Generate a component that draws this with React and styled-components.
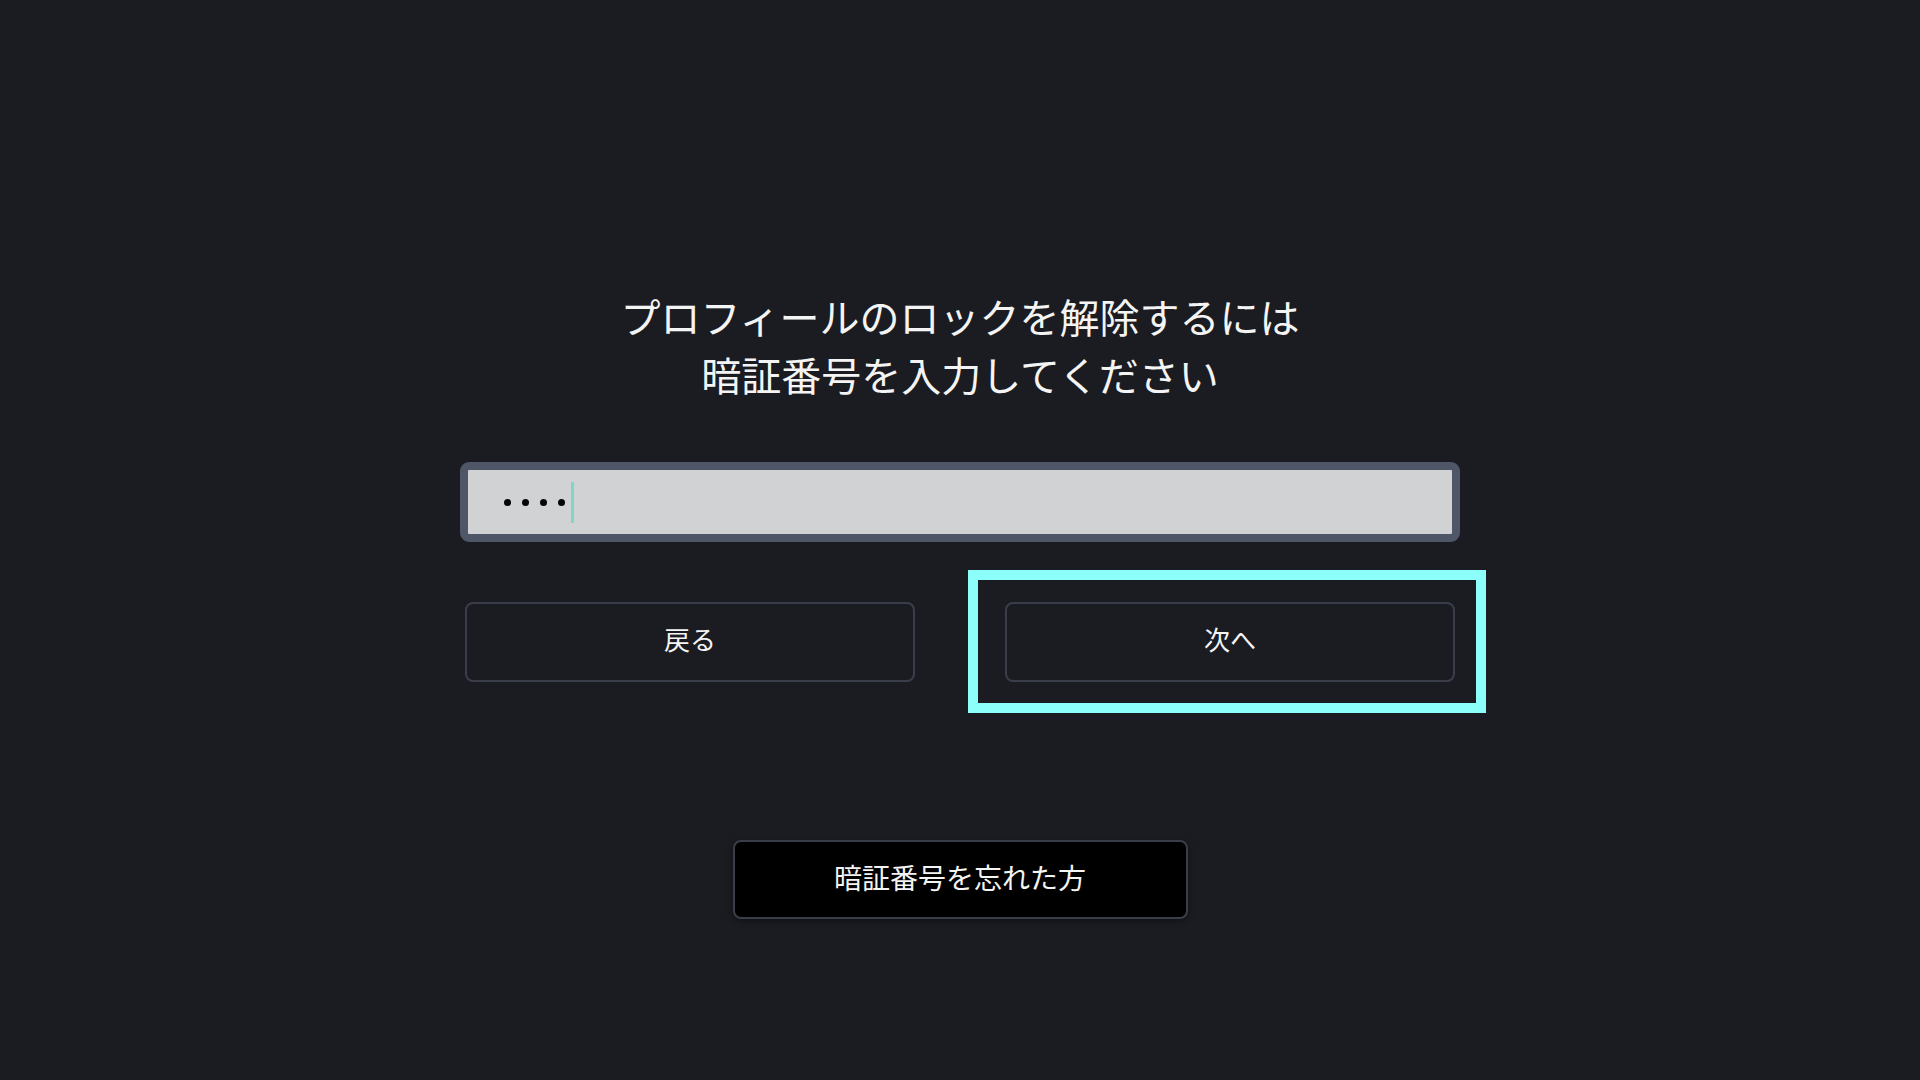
import React from "react";
import styled, { createGlobalStyle } from "styled-components";

const GlobalStyle = createGlobalStyle`
  html, body {
    margin: 0;
    padding: 0;
    background: #1b1c21;
  }
  body {
    font-family: "Noto Sans CJK JP", "Noto Sans", sans-serif;
    color: #f2f2f2;
  }
`;

const Screen = styled.main`
  width: 1920px;
  height: 1080px;
  background: #1b1c21;
  display: flex;
  flex-direction: column;
  align-items: center;
  padding-top: 287px;
  box-sizing: border-box;
`;

const Title = styled.h1`
  margin: 0;
  font-size: 40px;
  font-weight: 400;
  line-height: 58px;
  text-align: center;
  color: #f4f4f4;
`;

const PinField = styled.div`
  margin-top: 59px;
  width: 1000px;
  height: 80px;
  box-sizing: border-box;
  border: 8px solid #4f5667;
  border-radius: 9px;
  background: #d1d2d4;
  display: flex;
  align-items: center;
  padding-left: 36px;
`;

const Dots = styled.div`
  display: flex;
  align-items: center;
  gap: 11px;
`;

const Dot = styled.span`
  width: 7px;
  height: 7px;
  border-radius: 50%;
  background: #050505;
`;

const Caret = styled.span`
  width: 3px;
  height: 41px;
  margin-left: 6px;
  background: #7fd7c8;
`;

const ButtonRow = styled.div`
  margin-top: 28px;
  padding-right: 6px;
  display: flex;
  gap: 22px;
`;

const FocusFrame = styled.div`
  padding: 22px 21px 21px 27px;
  border: 10px solid ${({ $focused }) => ($focused ? "#8cfffa" : "transparent")};
`;

const ActionButton = styled.button`
  width: 450px;
  height: 80px;
  box-sizing: border-box;
  padding: 0 0 8px;
  background: #1b1c21;
  border: 2px solid #3a3d4a;
  border-radius: 8px;
  color: #f4f4f4;
  font-family: "Noto Sans CJK JP", "Noto Sans", sans-serif;
  font-size: 26px;
  display: flex;
  align-items: center;
  justify-content: center;
  cursor: pointer;
`;

const ForgotButton = styled.button`
  margin-top: 127px;
  width: 455px;
  height: 79px;
  box-sizing: border-box;
  padding: 0 0 6px;
  background: #000;
  border: 2px solid #3a3d4a;
  border-radius: 8px;
  box-shadow: 0 2px 6px rgba(0, 0, 0, 0.4);
  color: #f4f4f4;
  font-family: "Noto Sans CJK JP", "Noto Sans", sans-serif;
  font-size: 28px;
  cursor: pointer;
`;

export default function App() {
  const pin = [1, 2, 3, 4];
  return (
    <>
      <GlobalStyle />
      <Screen>
        <Title>
          プロフィールのロックを解除するには
          <br />
          暗証番号を入力してください
        </Title>
        <PinField>
          <Dots>
            {pin.map((d) => (
              <Dot key={d} />
            ))}
          </Dots>
          <Caret />
        </PinField>
        <ButtonRow>
          <FocusFrame>
            <ActionButton>戻る</ActionButton>
          </FocusFrame>
          <FocusFrame $focused>
            <ActionButton>次へ</ActionButton>
          </FocusFrame>
        </ButtonRow>
        <ForgotButton>暗証番号を忘れた方</ForgotButton>
      </Screen>
    </>
  );
}
